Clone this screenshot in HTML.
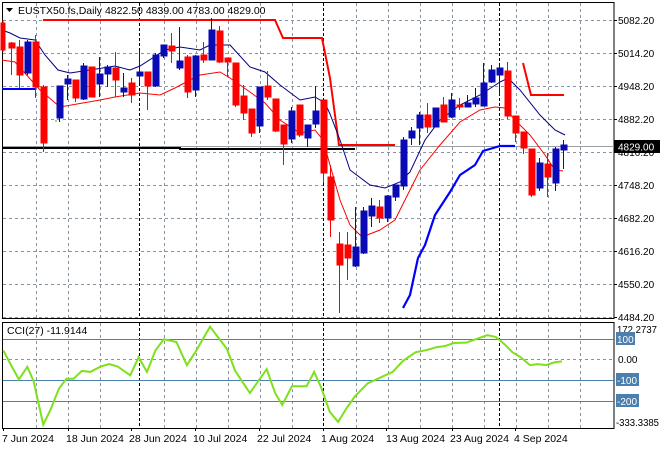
<!DOCTYPE html>
<html><head><meta charset="utf-8"><style>
html,body{margin:0;padding:0;background:#fff;}
svg{display:block;font-family:"Liberation Sans",sans-serif;}
</style></head><body>
<svg width="660" height="450" viewBox="0 0 660 450" xmlns="http://www.w3.org/2000/svg">
<rect width="660" height="450" fill="#fff"/>
<g stroke="#8a94a0" stroke-width="1" stroke-dasharray="3,3" fill="none">
<path d="M3 20.5H614M3 53.5H614M3 86.5H614M3 119.5H614M3 152.5H614M3 185.5H614M3 218.5H614M3 251.5H614M3 284.5H614M3 317.5H614"/>
<path d="M36.5 3V318M68.5 3V318M100.5 3V318M164.5 3V318M196.5 3V318M228.5 3V318M260.5 3V318M292.5 3V318M356.5 3V318M388.5 3V318M420.5 3V318M452.5 3V318M484.5 3V318M516.5 3V318M548.5 3V318M580.5 3V318"/>
<path d="M36.5 323V428M68.5 323V428M100.5 323V428M164.5 323V428M196.5 323V428M228.5 323V428M260.5 323V428M292.5 323V428M356.5 323V428M388.5 323V428M420.5 323V428M452.5 323V428M484.5 323V428M516.5 323V428M548.5 323V428M580.5 323V428"/>
<path d="M3 359.5H614"/>
</g>
<g stroke="#000" stroke-width="1" stroke-dasharray="3,2">
<path d="M139.5 3V318M323.5 3V318M499.5 3V318M139.5 323V428M323.5 323V428M499.5 323V428"/>
</g>
<g stroke="#000" fill="none" stroke-width="1">
<rect x="2.5" y="2.5" width="611.5" height="316"/>
<rect x="2.5" y="322.5" width="611.5" height="106"/>
</g>
<g stroke="#4a7fae" stroke-width="1">
<path d="M3 339.5H614M3 380.5H614M3 401.5H614"/>
</g>
<path d="M3 146.5H614" stroke="#9aa0a6" stroke-width="1"/>
<path d="M2 148H180V149H355" stroke="#000" stroke-width="2" fill="none"/>
<path d="M2 89H35" stroke="#0000ff" stroke-width="2"/>
<path d="M403 308L410 295L418 258L425 245L435 215L450 192L460 175L475 165L483 151L500 146L515 146" stroke="#0000ff" stroke-width="2.2" fill="none"/>
<path d="M43 20H275L283 38H322L330 78L339 145H395" stroke="#ff0000" stroke-width="2" fill="none"/>
<path d="M523 63L531 95H564" stroke="#ff0000" stroke-width="2" fill="none"/>
<path d="M55 121H57" stroke="#00cc00"/>
<path d="M2 30L10 33L20 38L35 40L45 55L58 70L70 73L90 70L115 66L130 70L140 66L165 50L180 47L200 50L210 45L230 45L250 67L265 72L280 85L300 100L315 97L325 103L330 114L340 140L350 170L370 185L385 188L400 182L410 172L425 140L440 120L460 105L480 95L500 82L508 78L520 90L540 115L555 130L565 135" stroke="#000080" stroke-width="1" fill="none"/>
<path d="M2 60L15 62L40 90L60 107L100 100L115 97L140 93L160 95L175 88L190 80L200 75L220 72L230 78L250 92L265 103L280 120L300 133L315 130L323 140L330 165L340 200L350 225L362 237L380 230L395 220L405 200L420 170L440 145L460 122L480 110L495 107L505 108L515 120L530 135L545 155L555 170L563 171" stroke="#ff0000" stroke-width="1" fill="none"/>
<g stroke-width="1">
<g stroke="#ff0000" fill="#ff0000">
<line x1="3" y1="20" x2="3" y2="52"/><rect x="1" y="23" width="4" height="27"/>
<line x1="11.5" y1="42" x2="11.5" y2="75"/><rect x="9" y="43" width="6" height="5"/>
<line x1="19.5" y1="40" x2="19.5" y2="88"/><rect x="17" y="47" width="6" height="28"/>
<line x1="35.5" y1="35" x2="35.5" y2="98"/><rect x="33" y="42" width="6" height="45"/>
<line x1="43.5" y1="85" x2="43.5" y2="152"/><rect x="41" y="87" width="6" height="56"/>
<line x1="75.5" y1="80" x2="75.5" y2="102"/><rect x="73" y="80" width="6" height="18"/>
<line x1="91.5" y1="67" x2="91.5" y2="97"/><rect x="89" y="67" width="6" height="30"/>
<line x1="115.5" y1="52" x2="115.5" y2="97"/><rect x="113" y="68" width="6" height="12"/>
<line x1="131.5" y1="78" x2="131.5" y2="103"/><rect x="129" y="83" width="6" height="12"/>
<line x1="147.5" y1="72" x2="147.5" y2="110"/><rect x="145" y="72" width="6" height="14"/>
<line x1="171.5" y1="33" x2="171.5" y2="63"/><rect x="169" y="46" width="6" height="5"/>
<line x1="187.5" y1="55" x2="187.5" y2="98"/><rect x="185" y="57" width="6" height="35"/>
<line x1="203.5" y1="42" x2="203.5" y2="63"/><rect x="201" y="55" width="6" height="5"/>
<line x1="219.5" y1="26" x2="219.5" y2="63"/><rect x="217" y="31" width="6" height="31"/>
<line x1="227.5" y1="58" x2="227.5" y2="77"/><rect x="225" y="58" width="6" height="4"/>
<line x1="235.5" y1="63" x2="235.5" y2="107"/><rect x="233" y="63" width="6" height="42"/>
<line x1="243.5" y1="85" x2="243.5" y2="120"/><rect x="241" y="96" width="6" height="17"/>
<line x1="251.5" y1="109" x2="251.5" y2="137"/><rect x="249" y="109" width="6" height="24"/>
<line x1="267.5" y1="71" x2="267.5" y2="100"/><rect x="265" y="86" width="6" height="11"/>
<line x1="275.5" y1="99" x2="275.5" y2="132"/><rect x="273" y="99" width="6" height="32"/>
<line x1="283.5" y1="125" x2="283.5" y2="165"/><rect x="281" y="125" width="6" height="19"/>
<line x1="299.5" y1="105" x2="299.5" y2="137"/><rect x="297" y="105" width="6" height="30"/>
<line x1="323.5" y1="100" x2="323.5" y2="183"/><rect x="321" y="100" width="6" height="73"/>
<line x1="330.5" y1="165" x2="330.5" y2="237"/><rect x="328" y="177" width="6" height="43"/>
<line x1="339.5" y1="232" x2="339.5" y2="313"/><rect x="337" y="244" width="6" height="21"/>
<line x1="347.5" y1="232" x2="347.5" y2="280"/><rect x="345" y="245" width="6" height="13"/>
<line x1="379.5" y1="200" x2="379.5" y2="223"/><rect x="377" y="207" width="6" height="11"/>
<line x1="427.5" y1="103" x2="427.5" y2="133"/><rect x="425" y="115" width="6" height="12"/>
<line x1="443.5" y1="97" x2="443.5" y2="122"/><rect x="441" y="105" width="6" height="17"/>
<line x1="459.5" y1="98" x2="459.5" y2="110"/><rect x="457" y="105" width="6" height="2"/>
<line x1="507.5" y1="62" x2="507.5" y2="119"/><rect x="505" y="71" width="6" height="45"/>
<line x1="515.5" y1="116" x2="515.5" y2="142"/><rect x="513" y="116" width="6" height="17"/>
<line x1="523.5" y1="132" x2="523.5" y2="154"/><rect x="521" y="132" width="6" height="16"/>
<line x1="531.5" y1="149" x2="531.5" y2="197"/><rect x="529" y="149" width="6" height="46"/>
<line x1="547.5" y1="153" x2="547.5" y2="197"/><rect x="545" y="164" width="6" height="13"/>
</g>
<g stroke="#0a0ab4" fill="#0a0ab4">
<line x1="27.5" y1="40" x2="27.5" y2="75"/><rect x="25" y="42" width="6" height="31"/>
<line x1="59.5" y1="86" x2="59.5" y2="122"/><rect x="57" y="86" width="6" height="32"/>
<line x1="67.5" y1="75" x2="67.5" y2="100"/><rect x="65" y="79" width="6" height="5"/>
<line x1="83.5" y1="63" x2="83.5" y2="100"/><rect x="81" y="66" width="6" height="33"/>
<line x1="99.5" y1="57" x2="99.5" y2="97"/><rect x="97" y="74" width="6" height="10"/>
<line x1="107.5" y1="65" x2="107.5" y2="87"/><rect x="105" y="67" width="6" height="7"/>
<line x1="123.5" y1="73" x2="123.5" y2="97"/><rect x="121" y="88" width="6" height="4"/>
<line x1="139.5" y1="50" x2="139.5" y2="83"/><rect x="137" y="72" width="6" height="4"/>
<line x1="155.5" y1="53" x2="155.5" y2="87"/><rect x="153" y="55" width="6" height="31"/>
<line x1="163.5" y1="45" x2="163.5" y2="58"/><rect x="161" y="45" width="6" height="11"/>
<line x1="179.5" y1="27" x2="179.5" y2="70"/><rect x="177" y="61" width="6" height="7"/>
<line x1="195.5" y1="55" x2="195.5" y2="97"/><rect x="193" y="56" width="6" height="34"/>
<line x1="211.5" y1="18" x2="211.5" y2="60"/><rect x="209" y="30" width="6" height="30"/>
<line x1="259.5" y1="87" x2="259.5" y2="133"/><rect x="257" y="87" width="6" height="39"/>
<line x1="291.5" y1="107" x2="291.5" y2="143"/><rect x="289" y="111" width="6" height="28"/>
<line x1="307.5" y1="125" x2="307.5" y2="147"/><rect x="305" y="125" width="6" height="13"/>
<line x1="315.5" y1="86" x2="315.5" y2="128"/><rect x="313" y="111" width="6" height="13"/>
<line x1="355.5" y1="207" x2="355.5" y2="267"/><rect x="353" y="247" width="6" height="19"/>
<line x1="363.5" y1="207" x2="363.5" y2="254"/><rect x="361" y="211" width="6" height="42"/>
<line x1="371.5" y1="198" x2="371.5" y2="227"/><rect x="369" y="206" width="6" height="10"/>
<line x1="387.5" y1="195" x2="387.5" y2="222"/><rect x="385" y="196" width="6" height="22"/>
<line x1="395.5" y1="185" x2="395.5" y2="201"/><rect x="393" y="185" width="6" height="12"/>
<line x1="403.5" y1="137" x2="403.5" y2="190"/><rect x="401" y="140" width="6" height="46"/>
<line x1="411.5" y1="127" x2="411.5" y2="145"/><rect x="409" y="131" width="6" height="7"/>
<line x1="419.5" y1="112" x2="419.5" y2="145"/><rect x="417" y="115" width="6" height="13"/>
<line x1="435.5" y1="108" x2="435.5" y2="127"/><rect x="433" y="108" width="6" height="19"/>
<line x1="451.5" y1="93" x2="451.5" y2="118"/><rect x="449" y="100" width="6" height="17"/>
<line x1="467.5" y1="95" x2="467.5" y2="107"/><rect x="465" y="103" width="6" height="4"/>
<line x1="475.5" y1="88" x2="475.5" y2="107"/><rect x="473" y="98" width="6" height="6"/>
<line x1="483.5" y1="63" x2="483.5" y2="106"/><rect x="481" y="83" width="6" height="23"/>
<line x1="491.5" y1="65" x2="491.5" y2="83"/><rect x="489" y="70" width="6" height="12"/>
<line x1="499.5" y1="65" x2="499.5" y2="95"/><rect x="497" y="68" width="6" height="7"/>
<line x1="539.5" y1="158" x2="539.5" y2="191"/><rect x="537" y="163" width="6" height="25"/>
<line x1="555.5" y1="147" x2="555.5" y2="191"/><rect x="553" y="149" width="6" height="34"/>
<line x1="563.5" y1="140" x2="563.5" y2="169"/><rect x="561" y="145" width="6" height="5"/>
</g>
</g>
<g transform="translate(0,308) scale(0.42,0.34)">
<polyline fill="none" stroke="#7fe01c" stroke-width="2" vector-effect="non-scaling-stroke" points="8,125 25,165 45,210 65,173 80,215 103,343 120,300 140,238 158,208 175,208 195,185 215,188 240,172 260,165 280,172 310,198 330,145 350,188 370,125 390,92 420,100 445,168 465,130 500,55 540,120 560,185 595,250 615,215 635,180 655,250 672,285 695,230 730,230 748,188 765,235 785,305 805,335 825,295 845,260 875,222 905,205 935,188 960,155 990,130 1015,124 1040,115 1060,112 1080,103 1110,102 1160,80 1180,85 1200,105 1220,130 1240,145 1262,168 1280,165 1300,168 1320,160 1338,157"/>
</g>
<path d="M6 8H13L9.5 12Z" fill="#000"/>
<text x="18" y="14" font-size="10.5" fill="#000">EUSTX50.fs,Daily  4822.50 4839.00 4783.00 4829.00</text>
<text x="7" y="334" font-size="10.5" fill="#000">CCI(27) -11.9144</text>
<g font-size="10" fill="#000">
<text x="618" y="24">5082.20</text>
<text x="618" y="57">5014.20</text>
<text x="618" y="90">4948.20</text>
<text x="618" y="123">4882.20</text>
<text x="618" y="156">4816.20</text>
<text x="618" y="189">4748.20</text>
<text x="618" y="222">4682.20</text>
<text x="618" y="255">4616.20</text>
<text x="618" y="288">4550.20</text>
<text x="618" y="321">4484.20</text>
<text x="617" y="333" textLength="40" lengthAdjust="spacingAndGlyphs">172.2737</text>
<text x="618" y="363">0.00</text>
<text x="616" y="426" textLength="43" lengthAdjust="spacingAndGlyphs">-333.3385</text>
</g>
<g stroke="#000"><path d="M614 20.5h3M614 53.5h3M614 86.5h3M614 119.5h3M614 152.5h3M614 185.5h3M614 218.5h3M614 251.5h3M614 284.5h3M614 317.5h3"/></g>
<rect x="614" y="140" width="46" height="13" fill="#000"/>
<text x="618" y="150.5" font-size="10" fill="#fff">4829.00</text>
<rect x="616" y="332" width="19" height="13" fill="#4a7fae"/>
<text x="617" y="343" font-size="10" fill="#fff">100</text>
<rect x="616" y="373" width="23" height="13" fill="#4a7fae"/>
<text x="617" y="384" font-size="10" fill="#fff">-100</text>
<rect x="616" y="394" width="23" height="13" fill="#4a7fae"/>
<text x="617" y="405" font-size="10" fill="#fff">-200</text>
<g font-size="10.5" fill="#000">
<text x="2" y="442">7 Jun 2024</text>
<text x="66" y="442">18 Jun 2024</text>
<text x="129" y="442">28 Jun 2024</text>
<text x="193" y="442">10 Jul 2024</text>
<text x="257" y="442">22 Jul 2024</text>
<text x="321" y="442">1 Aug 2024</text>
<text x="386" y="442">13 Aug 2024</text>
<text x="450" y="442">23 Aug 2024</text>
<text x="514" y="442">4 Sep 2024</text>
</g>
<g stroke="#000"><path d="M3.5 428v3M68.5 428v3M131.5 428v3M195.5 428v3M259.5 428v3M323.5 428v3M386.5 428v3M452.5 428v3M515.5 428v3"/></g>
</svg>
</body></html>
